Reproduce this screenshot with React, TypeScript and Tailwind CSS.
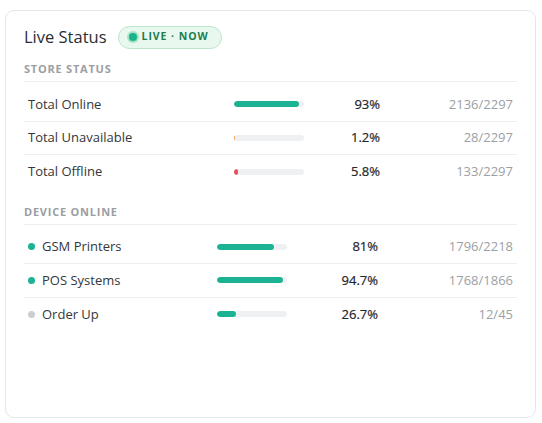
import React from "react";

type Row = {
  label: string;
  value: number;
  pct: string;
  count: string;
  color: string;
  dot?: string;
};

const storeRows: Row[] = [
  { label: "Total Online", value: 93, pct: "93%", count: "2136/2297", color: "bg-[#1bb394]" },
  { label: "Total Unavailable", value: 1.2, pct: "1.2%", count: "28/2297", color: "bg-[#f6a04d]" },
  { label: "Total Offline", value: 5.8, pct: "5.8%", count: "133/2297", color: "bg-[#e84d5b]" },
];

const deviceRows: Row[] = [
  { label: "GSM Printers", value: 81, pct: "81%", count: "1796/2218", color: "bg-[#1bb394]", dot: "bg-[#1bb394]" },
  { label: "POS Systems", value: 94.7, pct: "94.7%", count: "1768/1866", color: "bg-[#1bb394]", dot: "bg-[#1bb394]" },
  { label: "Order Up", value: 26.7, pct: "26.7%", count: "12/45", color: "bg-[#1bb394]", dot: "bg-[#cbcdd2]" },
];

function Bar({ value, color }: { value: number; color: string }) {
  return (
    <div className="h-[6px] w-[70px] overflow-hidden rounded-full bg-[#eef0f2]">
      <div className={`h-full rounded-full ${color}`} style={{ width: `${Math.max(value, 2)}%` }} />
    </div>
  );
}

function SectionTitle({ children }: { children: React.ReactNode }) {
  return (
    <div className="mb-[6px] border-b border-[#eceef0] pb-[4px] text-[11px] font-bold uppercase leading-[16px] tracking-[0.07em] text-[#9b9ea3]">
      {children}
    </div>
  );
}

export default function App() {
  return (
    <div className="min-h-[423px] bg-white pl-[5px] pr-[6px] pt-[10px] pb-[6px]" style={{ fontFamily: '"Open Sans", sans-serif' }}>
      <div className="h-[408px] rounded-[9px] border border-[#e4e6e9] bg-white px-[18px] pt-[14px]">
        <div className="flex items-center gap-[11px]">
          <h2 className="text-[16.5px] font-normal leading-[24px] text-[#2a2d33]">Live Status</h2>
          <span className="flex h-[23px] items-center gap-[5px] rounded-full border border-[#b9e7c9] bg-[#e9f8ee] pl-[10px] pr-[12px]">
            <span className="h-[8px] w-[8px] rounded-full bg-[#19b38a] ring-[2px] ring-[#a6e2c4]" />
            <span className="text-[10.5px] font-bold tracking-[0.09em] text-[#1d7d4f]">LIVE · NOW</span>
          </span>
        </div>

        <div className="mt-[12px]">
          <SectionTitle>Store Status</SectionTitle>
          {storeRows.map((r, i) => (
            <div
              key={r.label}
              className={`grid h-[33.5px] grid-cols-[206px_70px_76px_1fr] items-center px-1 ${i < storeRows.length - 1 ? "border-b border-[#eceef0]" : ""}`}
            >
              <span className="text-[13px] text-[#33363b]">{r.label}</span>
              <Bar value={r.value} color={r.color} />
              <span className="text-right text-[13px] text-[#22252a] [-webkit-text-stroke:0.2px_#22252a]">{r.pct}</span>
              <span className="text-right text-[13px] text-[#9c9fa4]">{r.count}</span>
            </div>
          ))}
        </div>

        <div className="mt-[15px]">
          <SectionTitle>Device Online</SectionTitle>
          {deviceRows.map((r, i) => (
            <div
              key={r.label}
              className={`grid h-[33.5px] grid-cols-[189px_70px_91px_1fr] items-center px-1 ${i < deviceRows.length - 1 ? "border-b border-[#eceef0]" : ""}`}
            >
              <span className="flex items-center gap-[7px] text-[13px] text-[#33363b]">
                <span className={`h-[7px] w-[7px] rounded-full ${r.dot}`} />
                {r.label}
              </span>
              <Bar value={r.value} color={r.color} />
              <span className="text-right text-[13px] text-[#22252a] [-webkit-text-stroke:0.2px_#22252a]">{r.pct}</span>
              <span className="text-right text-[13px] text-[#9c9fa4]">{r.count}</span>
            </div>
          ))}
        </div>
      </div>
    </div>
  );
}
